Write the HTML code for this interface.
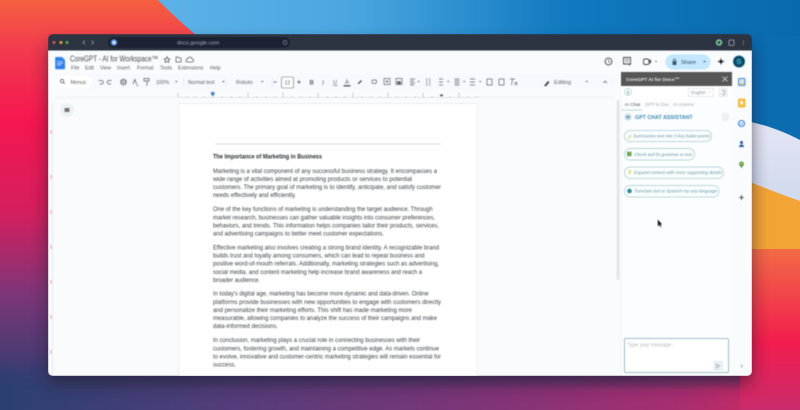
<!DOCTYPE html>
<html><head><meta charset="utf-8"><style>
html,body{margin:0;padding:0;width:800px;height:410px;overflow:hidden;background:#333}
svg{display:block}
text{font-family:"Liberation Sans",sans-serif}
.d{font-size:6.6px;fill:#3c4043}
.m{font-size:5.2px;fill:#5f6368}
.t{font-size:5.2px;fill:#5f6368}
.c{font-size:4.6px;fill:#6d9aa8;font-style:italic}
.i{fill:none;stroke:#5f6368;stroke-width:.8}
</style></head><body>
<svg width="800" height="410" viewBox="0 0 800 410" xmlns="http://www.w3.org/2000/svg">
<defs>
<linearGradient id="bg" x1="0" y1="0" x2="0" y2="1">
<stop offset="0" stop-color="#f4603f"/><stop offset=".12" stop-color="#f33a4f"/><stop offset=".3" stop-color="#f5164f"/><stop offset=".52" stop-color="#d41f5e"/><stop offset=".72" stop-color="#7c3678"/><stop offset=".9" stop-color="#3f3c72"/><stop offset="1" stop-color="#2a3f6e"/>
</linearGradient>
<linearGradient id="bot" x1="0" y1="0" x2="1" y2="0">
<stop offset="0" stop-color="#2a4070"/><stop offset=".3" stop-color="#553d7a"/><stop offset=".6" stop-color="#7e3578"/><stop offset=".85" stop-color="#a72e70"/><stop offset="1" stop-color="#d9275f"/>
</linearGradient>
<linearGradient id="fade" x1="0" y1="0" x2="0" y2="1">
<stop offset="0" stop-color="#000"/><stop offset=".6" stop-color="#fff"/><stop offset="1" stop-color="#fff"/>
</linearGradient>
<mask id="fm" maskUnits="userSpaceOnUse" x="0" y="360" width="800" height="50"><rect x="0" y="360" width="800" height="50" fill="url(#fade)"/></mask>
<linearGradient id="blue" x1="0" y1="0" x2="1" y2="0">
<stop offset="0" stop-color="#5cb2e8"/><stop offset=".3" stop-color="#4ba6e0"/><stop offset=".65" stop-color="#0f78bf"/><stop offset="1" stop-color="#0a69ab"/>
</linearGradient>
<linearGradient id="red" x1="0" y1="0" x2="0" y2="1">
<stop offset="0" stop-color="#f26a45"/><stop offset=".58" stop-color="#f21d4e"/><stop offset="1" stop-color="#c92c6c"/>
</linearGradient>
<linearGradient id="light" x1="0" y1="0" x2="0" y2="1">
<stop offset="0" stop-color="#e4e6f4"/><stop offset="1" stop-color="#c3d0ea"/>
</linearGradient>
<filter id="sh" x="-10%" y="-10%" width="120%" height="125%"><feGaussianBlur stdDeviation="8"/></filter>
<clipPath id="win"><rect x="48" y="34" width="704" height="342" rx="5"/></clipPath>
<clipPath id="frame"><rect width="800" height="410"/></clipPath>
</defs>

<g clip-path="url(#frame)">
<rect width="800" height="410" fill="url(#bg)"/>
<rect x="0" y="360" width="800" height="50" fill="url(#bot)" mask="url(#fm)"/>
<path d="M158 0C172 14 185 26 197 36L800 36V0Z" fill="url(#blue)"/>
<rect x="600" y="36" width="200" height="130" fill="#0b6cb0"/>
<path d="M740 120C765 124 785 132 800 140V260H740Z" fill="url(#light)"/>
<path d="M740 178C760 186 780 194 800 201V260H740Z" fill="#f2a434"/>
<rect x="740" y="249" width="60" height="161" fill="url(#red)"/>
<rect x="48" y="44" width="704" height="340" rx="6" fill="#201a2e" opacity=".6" filter="url(#sh)"/>
</g>

<g clip-path="url(#win)"><g style="filter:blur(.4px)">
<rect x="48" y="34" width="704" height="342" fill="#f9fbfd"/>
<rect x="48" y="34" width="704" height="16.500" fill="#2c3341"/>
<circle cx="54" cy="42.500" r="1.500" fill="#e0584e"/><circle cx="61" cy="42.500" r="1.500" fill="#e0b040"/><circle cx="67" cy="42.500" r="1.500" fill="#4fb35a"/>
<path d="M85 40.500l-2 2 2 2M91.500 40.500l2 2-2 2" fill="none" stroke="#9aa0aa" stroke-width=".8"/>
<rect x="108" y="37" width="182" height="11" rx="5.500" fill="#1c2232"/>
<circle cx="114" cy="42.500" r="3.200" fill="#4f8fe0"/><rect x="112.500" y="41" width="3" height="3" fill="#dfe9fb"/>
<text x="177" y="44.500" font-size="5.600" fill="#a8adb6">docs.google.com</text>
<circle cx="285" cy="42.500" r="1.900" fill="none" stroke="#8b909a" stroke-width=".7"/>
<circle cx="719" cy="42.500" r="3.200" fill="#7cc79a"/><circle cx="719" cy="42.500" r="1.400" fill="#2c3341"/>
<rect x="729" y="40" width="5" height="5.500" rx="1" fill="none" stroke="#aab0b8" stroke-width=".8"/>
<path d="M743.500 40.500v.8M743.500 42.300v.8M743.500 44.100v.8" stroke="#aab0b8" stroke-width=".9"/>

<!-- docs head -->
<path d="M56 57h6l3 3v8.500a.8.8 0 0 1-.8.8H56a.8.8 0 0 1-.8-.8V57.800a.8.8 0 0 1 .8-.8Z" fill="#2f80ed"/>
<path d="M57 61.500h6M57 63.300h6M57 65.100h4" stroke="#fff" stroke-width=".6"/>
<text x="70" y="61.500" font-size="8" fill="#4a4d50" textLength="88" lengthAdjust="spacingAndGlyphs">CoreGPT - AI for Workspace™</text>
<path d="M167 56.800l.9 1.900 2 .3-1.500 1.400.4 2-1.800-1-1.800 1 .4-2-1.500-1.400 2-.3Z" class="i"/>
<path d="M176 57h2l.8 1h2.200v4h-5Z" class="i"/>
<path d="M187 62h5a1.500 1.500 0 0 0 .2-3 2.300 2.300 0 0 0-4.400-.4A1.800 1.800 0 0 0 187 62Z" class="i"/>
<g class="m">
<text x="71" y="69.500">File</text><text x="85" y="69.500">Edit</text><text x="100" y="69.500">View</text><text x="117" y="69.500">Insert</text><text x="137" y="69.500">Format</text><text x="160" y="69.500">Tools</text><text x="178" y="69.500">Extensions</text><text x="210" y="69.500">Help</text>
</g>
<circle cx="608.500" cy="61.500" r="3.400" fill="none" stroke="#444" stroke-width=".9"/><path d="M608.500 59.500v2.200l1.500 1" class="i"/>
<path d="M623.500 57.500h7v6.500l-1 .8v-.8h-6Z" fill="none" stroke="#444" stroke-width=".9"/><path d="M625 59.700h4M625 61.500h4" stroke="#444" stroke-width=".6"/>
<rect x="643.500" y="59" width="5.500" height="5.500" rx="1.500" fill="none" stroke="#444" stroke-width=".9"/><path d="M649 60.500l2-1v4l-2-1Z" fill="#444"/><path d="M655 61l1 1 1-1" fill="#555" stroke="#555" stroke-width=".4"/>
<rect x="665.500" y="54.500" width="45" height="15" rx="7.500" fill="#c2e7ff"/>
<rect x="672.500" y="61" width="4" height="4" rx=".6" fill="#3c5a70"/><path d="M673.500 61v-1a1 1 0 0 1 2 0v1" class="i"/>
<text x="681" y="64" font-size="5.600" fill="#2f4a5e">Share</text>
<path d="M703 61l1.500 1.500L706 61Z" fill="#355468"/>
<path d="M721 57.500c.5 3 1.200 3.500 4 4-2.800.5-3.500 1-4 4-.5-3-1.200-3.500-4-4 2.800-.5 3.500-1 4-4Z" fill="#222"/>
<circle cx="739" cy="61.500" r="6" fill="#0c5f80"/><circle cx="739" cy="61.500" r="4.200" fill="none" stroke="#17273a" stroke-width=".9"/><text x="736.500" y="64" font-size="7" fill="#5fc8d8">S</text>

<!-- toolbar -->
<rect x="55" y="74" width="560" height="15" rx="7.500" fill="#f6f9fd"/>
<rect x="56" y="75.500" width="36" height="13" rx="6.500" fill="#fff"/>
<circle cx="62" cy="81" r="1.700" class="i"/><path d="M63.300 82.400l1.500 1.500" class="i"/>
<text x="70.500" y="84" class="t">Menus</text>
<g class="i">
<path d="M98.500 80.500h3a1.600 1.600 0 0 1 0 3.500h-2"/><path d="M111.500 80.500h-2.500a1.600 1.600 0 0 0 0 3.500h2"/>
<circle cx="123.500" cy="82" r="2.800"/><path d="M121 81h5M121 83h5"/>
<path d="M133 84l1.800-4.500 1.800 4.500M136.500 85l1.500 1"/>
<path d="M144 78.500h5v2.500h-5ZM147 81v5"/>
</g>
<text x="156" y="84" class="t">100%</text><path d="M175 81l1.300 1.500L177.600 81Z" fill="#5f6368"/>
<path d="M183.500 77v10M225.500 77v10M272.500 77v10M346.500 77v10" stroke="#dfe3e8" stroke-width=".6"/>
<text x="188" y="84" class="t">Normal text</text><path d="M222 81l1.300 1.500L224.600 81Z" fill="#5f6368"/>
<text x="236" y="84" class="t">Roboto</text><path d="M261 81l1.300 1.500L263.600 81Z" fill="#5f6368"/>
<path d="M273.500 82h3.500" stroke="#5f6368" stroke-width=".8"/>
<rect x="281.500" y="77" width="12" height="11" rx="1.500" fill="#fff" stroke="#6a6f75" stroke-width=".6"/>
<text x="284.500" y="84.500" class="t">12</text>
<path d="M297 82h4M299 80v4" stroke="#5f6368" stroke-width=".8"/>
<text x="309.500" y="84.500" font-size="6" font-weight="bold" fill="#5f6368">B</text>
<text x="322" y="84.500" font-size="6" font-style="italic" style="font-family:'Liberation Serif'" fill="#5f6368">I</text>
<text x="333" y="84" font-size="5.500" fill="#5f6368">U</text><path d="M333 85.500h4.500" stroke="#5f6368" stroke-width=".6"/>
<text x="345" y="84" font-size="6" fill="#5f6368">A</text><path d="M343.500 85.800h7" stroke="#222" stroke-width="1"/>
<path d="M358 83l3-3 1 1-3 3h-1Z" fill="#555"/>
<g class="i" style="stroke-width:.7">
<rect x="372" y="80" width="4.500" height="3.500" rx="1.200"/><rect x="384" y="78.500" width="6" height="6"/><path d="M387 80v3M385.500 81.500h3"/>
<rect x="396" y="78.500" width="6" height="6"/><rect x="397.500" y="81.500" width="3" height="2.300" fill="#5f6368"/>
<path d="M410 79h5M410 81h4M410 83h5M410 85h4"/><path d="M426 79h1.500M426 81h1.500M426 83h1.500M426 85h1.500M429 79h1.500M429 81h1.500M429 83h1.500M429 85h1.500"/>
<path d="M439 79h4M439 82h4M439 85h4"/><path d="M454.500 79h5M454.500 81h5M454.500 83h5M454.500 85h5"/><path d="M470 79h5M470 82h5M470 85h5"/>
<rect x="487" y="79" width="5" height="6"/><rect x="499" y="79" width="5" height="6"/>
<path d="M510 79h5M512.500 79l-1 6M514.500 82l3 3M517.500 82l-3 3"/>
</g>
<path d="M417.500 81l1.200 1.400L419.900 81ZM447 81l1.200 1.400L449.400 81ZM463 81l1.200 1.400L465.400 81ZM479 81l1.200 1.400L481.400 81Z" fill="#5f6368"/>
<path d="M544.500 85l3.500-4 1.500 1.300-3.500 4H544.500Z" fill="#444"/>
<text x="554" y="84" font-size="5.600" fill="#5f6368">Editing</text>
<path d="M585.500 81l1.300 1.500L588 81Z" fill="#5f6368"/>
<path d="M603.500 83l1.700-1.800 1.700 1.800" class="i"/>
<path d="M55 97.500H615" stroke="#e4e7eb" stroke-width=".6"/>

<!-- ruler -->
<path d="M178 97.500H477" stroke="#c5c9ce" stroke-width=".3"/>
<g stroke="#9aa0a6" stroke-width=".5">
<path d="M178 92.500v5M213 93v4M248 92.500v5M283 92.500v5M318 92.500v5M353 92.500v5M388 92.500v5M423 92.500v5M459 92.500v5"/>
<path d="M187 96v1.500M195 96v1.500M204 96v1.500M222 96v1.500M231 96v1.500M240 96v1.500M257 96v1.500M266 96v1.500M275 96v1.500M292 96v1.500M301 96v1.500M310 96v1.500M327 96v1.500M336 96v1.500M345 96v1.500M362 96v1.500M371 96v1.500M380 96v1.500M397 96v1.500M406 96v1.500M415 96v1.500M432 96v1.500M450 96v1.500M468 96v1.500M477 96v1.500"/>
</g>
<path d="M210.500 93.500h4.500l-2.200 2.600Z" fill="#2f6fc0"/><rect x="211" y="92" width="3.500" height="1.200" fill="#2f6fc0"/>
<path d="M439.500 94.500h4l-2 2.400Z" fill="#3c4a5c"/>

<rect x="60" y="103" width="14" height="14" rx="7" fill="#eef1f5"/>
<rect x="64.500" y="108" width="5" height="4" fill="#777"/>
<path d="M52.500 103V376" stroke="#dadde1" stroke-width=".6"/>
<path d="M51 130v4M51 175v4M51 210v4M51 245v4M51 280v4M51 315v4M51 350v4" stroke="#e88" stroke-width=".8"/>

<!-- page -->
<rect x="178.500" y="103.500" width="299" height="272.500" fill="#fff" stroke="#e4e7ea" stroke-width=".7"/>
<path d="M215 144H441" stroke="#d5d7d9" stroke-width="1.100"/>
<g class="d">
<text x="213" y="158.500" font-weight="bold" style="fill:#2a2c2e" textLength="109" lengthAdjust="spacingAndGlyphs">The Importance of Marketing in Business</text>
<text x="213" y="172.800" textLength="224" lengthAdjust="spacingAndGlyphs">Marketing is a vital component of any successful business strategy. It encompasses a</text>
<text x="213" y="180.800" textLength="199" lengthAdjust="spacingAndGlyphs">wide range of activities aimed at promoting products or services to potential</text>
<text x="213" y="189" textLength="228" lengthAdjust="spacingAndGlyphs">customers. The primary goal of marketing is to identify, anticipate, and satisfy customer</text>
<text x="213" y="197.200" textLength="83" lengthAdjust="spacingAndGlyphs">needs effectively and efficiently.</text>
<text x="213" y="211.200" textLength="219.600" lengthAdjust="spacingAndGlyphs">One of the key functions of marketing is understanding the target audience. Through</text>
<text x="213" y="219.300" textLength="222" lengthAdjust="spacingAndGlyphs">market research, businesses can gather valuable insights into consumer preferences,</text>
<text x="213" y="227.400" textLength="226" lengthAdjust="spacingAndGlyphs">behaviors, and trends. This information helps companies tailor their products, services,</text>
<text x="213" y="235.500" textLength="171" lengthAdjust="spacingAndGlyphs">and advertising campaigns to better meet customer expectations.</text>
<text x="213" y="249.500" textLength="226" lengthAdjust="spacingAndGlyphs">Effective marketing also involves creating a strong brand identity. A recognizable brand</text>
<text x="213" y="257.600" textLength="211.500" lengthAdjust="spacingAndGlyphs">builds trust and loyalty among consumers, which can lead to repeat business and</text>
<text x="213" y="265.700" textLength="226" lengthAdjust="spacingAndGlyphs">positive word-of-mouth referrals. Additionally, marketing strategies such as advertising,</text>
<text x="213" y="273.800" textLength="209" lengthAdjust="spacingAndGlyphs">social media, and content marketing help increase brand awareness and reach a</text>
<text x="213" y="281.800" textLength="47" lengthAdjust="spacingAndGlyphs">broader audience.</text>
<text x="213" y="295.600" textLength="215.600" lengthAdjust="spacingAndGlyphs">In today's digital age, marketing has become more dynamic and data-driven. Online</text>
<text x="213" y="303.900" textLength="228" lengthAdjust="spacingAndGlyphs">platforms provide businesses with new opportunities to engage with customers directly</text>
<text x="213" y="312" textLength="199" lengthAdjust="spacingAndGlyphs">and personalize their marketing efforts. This shift has made marketing more</text>
<text x="213" y="320" textLength="224" lengthAdjust="spacingAndGlyphs">measurable, allowing companies to analyze the success of their campaigns and make</text>
<text x="213" y="328.100" textLength="65" lengthAdjust="spacingAndGlyphs">data-informed decisions.</text>
<text x="213" y="342.200" textLength="207" lengthAdjust="spacingAndGlyphs">In conclusion, marketing plays a crucial role in connecting businesses with their</text>
<text x="213" y="350.300" textLength="226" lengthAdjust="spacingAndGlyphs">customers, fostering growth, and maintaining a competitive edge. As markets continue</text>
<text x="213" y="358.400" textLength="228" lengthAdjust="spacingAndGlyphs">to evolve, innovative and customer-centric marketing strategies will remain essential for</text>
<text x="213" y="366.500" textLength="23" lengthAdjust="spacingAndGlyphs">success.</text>
</g>
<rect x="616.800" y="100" width="2.400" height="180" rx="1" fill="#dfe3e7"/>

<!-- sidebar -->
<rect x="621" y="86" width="111" height="290" fill="#fbfdfe"/>
<path d="M621 86V376" stroke="#e6e9ec" stroke-width=".5"/>
<rect x="621" y="72" width="111" height="14" fill="#565656"/>
<text x="626" y="81" font-size="4.900" font-weight="bold" fill="#e6e6e6">CoreGPT AI for Docs™</text>
<path d="M722.500 76.500l5 5M727.500 76.500l-5 5" stroke="#ddd" stroke-width=".8"/>
<rect x="621" y="86" width="111" height="13" fill="#fff"/>
<circle cx="628" cy="92" r="3.500" fill="none" stroke="#6aa" stroke-width=".5"/><text x="626.800" y="94" font-size="4.500" fill="#688">$</text>
<rect x="688.500" y="88.500" width="25" height="8" fill="#fff" stroke="#ccd2d6" stroke-width=".5"/><text x="691" y="94.200" font-size="4.500" fill="#8b9296">English</text><path d="M708 91.500l1.200 1.300 1.200-1.300" fill="none" stroke="#aaa" stroke-width=".4"/>
<rect x="719" y="88.500" width="8" height="8" fill="#f3f5f6" stroke="#d5dade" stroke-width=".5"/><path d="M722 90.500h2.500v4H722" fill="none" stroke="#778" stroke-width=".5"/>
<text x="624.500" y="106.200" font-size="4.700" fill="#555">AI Chat</text><text x="645" y="106.200" font-size="4.700" fill="#a3a8ac">GPT in Doc</text><text x="673" y="106.200" font-size="4.700" fill="#a3a8ac">AI Actions</text>
<path d="M621 110H642" stroke="#b0c4cc" stroke-width=".8"/>
<circle cx="628" cy="117" r="3.500" fill="#c3dbe6"/><path d="M626.500 116h3v2h-3Z" fill="#6b9ab0"/>
<text x="635" y="119" font-size="5.300" font-weight="bold" fill="#3e8cb3">GPT CHAT ASSISTANT</text>
<rect x="722" y="113" width="7" height="8" rx="1.500" fill="#eef1f2"/>

<g fill="#fafdfd" stroke="#a9c9d4" stroke-width=".7">
<rect x="624.500" y="130.500" width="87" height="11" rx="5.500"/>
<rect x="624.500" y="148.500" width="70" height="11.500" rx="5.700"/>
<rect x="624.500" y="167" width="99" height="11.500" rx="5.700"/>
<rect x="624.500" y="185.500" width="94.500" height="11.500" rx="5.700"/>
</g>
<g class="c">
<text x="633" y="137.500" textLength="77" lengthAdjust="spacingAndGlyphs">Summarize text into 3 key bullet points</text>
<text x="634" y="155.800" textLength="58" lengthAdjust="spacingAndGlyphs">Check and fix grammar or text</text>
<text x="634" y="174.200" textLength="88" lengthAdjust="spacingAndGlyphs">Expand content with more supporting details</text>
<text x="634" y="192.500" textLength="83" lengthAdjust="spacingAndGlyphs">Translate text to Spanish my-any-language</text>
</g>
<path d="M628 138.500l2.500-4 .9.600-2.500 4Z" fill="#e0c85a"/>
<rect x="627" y="151.700" width="4.500" height="4.500" fill="#6aa84f"/>
<path d="M629.500 170l-1 4h1.500l.8-4Z" fill="#e8c53a"/>
<circle cx="629.500" cy="191" r="2.300" fill="#2b8c9c"/>

<path d="M657.800 219.500v6.700l1.500-1.300 1.200 2.300.9-.4-1.200-2.200 1.900-.1Z" fill="#111"/>

<rect x="624.500" y="338.500" width="104" height="34" rx="1.500" fill="#fff" stroke="#83aebd" stroke-width=".8"/>
<text x="627.500" y="346.500" font-size="5" fill="#b3b8bb">Type your message...</text>
<rect x="714" y="361.500" width="8.500" height="8.500" fill="#eef4f6" stroke="#c5d9e0" stroke-width=".5"/>
<path d="M716.500 364l3.500 2-3.500 2Z" fill="none" stroke="#7a9aa8" stroke-width=".6"/>
<path d="M741 364.500l1.500 1.500-1.500 1.500" fill="none" stroke="#888" stroke-width=".6"/>

<!-- right strip icons -->
<rect x="738.500" y="78.500" width="6.500" height="7" rx="1" fill="#d7e3ec" stroke="#3f8fd8" stroke-width="1"/><path d="M739 84h5.500" stroke="#d9b84a" stroke-width="1"/>
<rect x="738" y="98.500" width="7.500" height="9" rx="1" fill="#f6be41"/><rect x="740.500" y="101" width="2.200" height="3.500" fill="#fff"/>
<circle cx="741.500" cy="123.500" r="3" fill="none" stroke="#2c7cd6" stroke-width="1.100"/><path d="M740 123.500l1 1 2-2" fill="none" stroke="#2c7cd6" stroke-width=".6"/>
<circle cx="741.500" cy="142.500" r="1.500" fill="#2a5b9a"/><path d="M739 147a2.500 2.500 0 0 1 5 0Z" fill="#2a5b9a"/>
<path d="M741.500 161.500a2.400 2.400 0 0 1 2.400 2.400c0 1.600-1.500 2.600-2.400 4.400-.9-1.800-2.400-2.800-2.400-4.400a2.400 2.400 0 0 1 2.400-2.400Z" fill="#5d9e4f"/><circle cx="741.500" cy="163.800" r=".9" fill="#e9c04a"/>
<path d="M741.500 195v5M739 197.500h5" stroke="#333" stroke-width=".8"/>
</g></g>
</svg>
</body></html>
